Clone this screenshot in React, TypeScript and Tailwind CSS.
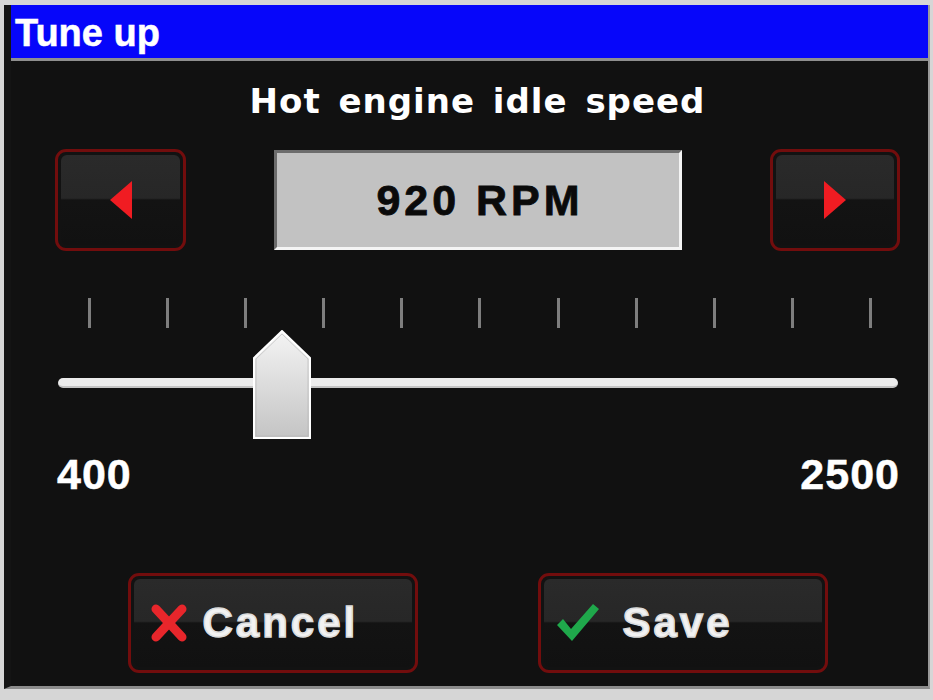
const MIN = 400
const MAX = 2500
const VALUE = 920
const TICKS = 11

function RedButton({ children, className = '' }: { children: React.ReactNode; className?: string }) {
  return (
    <div className={`border-[3px] border-[#720d0d] rounded-[11px] p-[3px] bg-[#121212] ${className}`}>
      <div className="w-full h-full rounded-[6px] bg-[linear-gradient(to_bottom,#2a2a2a_0%,#272727_48%,#131313_50%,#111111_100%)] flex items-center">
        {children}
      </div>
    </div>
  )
}

function Thumb() {
  return (
    <svg width="58" height="109" viewBox="0 0 58 109">
      <defs>
        <linearGradient id="thumbFill" x1="0" y1="0" x2="0" y2="1">
          <stop offset="0%" stopColor="#f4f4f4" />
          <stop offset="100%" stopColor="#c4c4c4" />
        </linearGradient>
      </defs>
      <polygon
        points="1,28 29,1 57,28 57,108 1,108"
        fill="url(#thumbFill)"
        stroke="#ffffff"
        strokeWidth="2"
      />
      <polygon points="3,29 29,4 55,29 55,106 3,106" fill="none" stroke="#b5b5b5" strokeWidth="1" opacity="0.6" />
    </svg>
  )
}

export default function App() {
  const frac = (VALUE - MIN) / (MAX - MIN)
  const thumbLeft = 34 + frac * 781 - 29

  return (
    <div className="w-[933px] h-[700px] bg-[#d6d6d6] flex pl-[4px] pt-[5px] pr-[3px] pb-[11px] font-['Liberation_Sans',Arial,sans-serif]">
      <div className="flex-1 flex flex-col bg-[#111111] border-l-[7px] border-l-[#141414] border-r-[2px] border-r-[#9a9a9a] border-b-[3px] border-b-[#8c8c8c]">
        {/* title bar */}
        <div className="h-[56px] shrink-0 bg-[#0606fa] border-b-[3px] border-b-[#8f8f8f] flex items-center pl-[4px] pt-[2px]">
          <span className="text-white font-bold text-[38px] leading-none [-webkit-text-stroke:0.5px_#ffffff]">Tune up</span>
        </div>

        <div className="flex flex-col pl-[44px] pr-[28px]">
          <div className="mt-[23px] text-center text-white font-bold text-[34px] leading-none tracking-[1px] [word-spacing:5px] font-['DejaVu_Sans',Verdana,sans-serif]">
            Hot engine idle speed
          </div>

          {/* value row */}
          <div className="mt-[31px] flex justify-between items-center">
            <RedButton className="w-[131px] h-[102px]">
              <div className="w-full flex justify-center">
                <svg width="22" height="38" viewBox="0 0 22 38">
                  <polygon points="0,19 22,0 22,38" fill="#f01c22" />
                </svg>
              </div>
            </RedButton>

            <div className="w-[408px] h-[100px] bg-[#c2c2c2] border-[3px] border-t-[#6c6c6c] border-l-[#6c6c6c] border-b-[#f4f4f4] border-r-[#f4f4f4] flex items-center justify-center">
              <span className="text-[43px] leading-none font-bold tracking-[4px] text-[#0a0a0a] pl-[4px] [-webkit-text-stroke:0.8px_#0a0a0a]">920 RPM</span>
            </div>

            <RedButton className="w-[130px] h-[102px]">
              <div className="w-full flex justify-center">
                <svg width="22" height="38" viewBox="0 0 22 38">
                  <polygon points="22,19 0,0 0,38" fill="#f01c22" />
                </svg>
              </div>
            </RedButton>
          </div>

          {/* ticks */}
          <div className="mt-[47px] flex justify-between pl-[33px] pr-[28px]">
            {Array.from({ length: TICKS }).map((_, i) => (
              <div key={i} className="w-[3px] h-[30px] bg-[#7e7e7e]" />
            ))}
          </div>

          {/* slider */}
          <div className="relative mt-[3px] h-[107px]">
            <div className="mt-[47px] ml-[3px] mr-[2px] h-[10px] rounded-full bg-[#ececec] border-b-[2px] border-b-[#c4c4c4]" />
            <div className="absolute top-[-1px]" style={{ left: thumbLeft }}>
              <Thumb />
            </div>
          </div>

          {/* range labels */}
          <div className="mt-[15px] flex justify-between text-white font-bold text-[43px] leading-none tracking-[1px] pl-[2px]">
            <span className="[-webkit-text-stroke:0.5px_#ffffff]">400</span>
            <span className="[-webkit-text-stroke:0.5px_#ffffff]">2500</span>
          </div>

          {/* action buttons */}
          <div className="mt-[77px] flex justify-center gap-[120px]">
            <RedButton className="w-[290px] h-[100px]">
              <div className="flex items-center pl-[16px] gap-[15px]">
                <svg width="38" height="40" viewBox="0 0 38 40">
                  <line x1="6" y1="6" x2="32" y2="34" stroke="#e8262b" strokeWidth="9" strokeLinecap="round" />
                  <line x1="32" y1="6" x2="6" y2="34" stroke="#e8262b" strokeWidth="9" strokeLinecap="round" />
                </svg>
                <span className="text-[#f2f2f2] font-bold text-[42px] leading-none tracking-[3px] [-webkit-text-stroke:1.5px_#dcdcdc]">Cancel</span>
              </div>
            </RedButton>
            <RedButton className="w-[290px] h-[100px]">
              <div className="flex items-center pl-[13px] gap-[24px]">
                <svg width="42" height="38" viewBox="0 0 42 38">
                  <polygon points="0,21 6,15 14,25 36,0 42,5 15,37" fill="#1fa84b" />
                </svg>
                <span className="text-[#f2f2f2] font-bold text-[42px] leading-none tracking-[3px] [-webkit-text-stroke:1.5px_#dcdcdc]">Save</span>
              </div>
            </RedButton>
          </div>
        </div>
      </div>
    </div>
  )
}
